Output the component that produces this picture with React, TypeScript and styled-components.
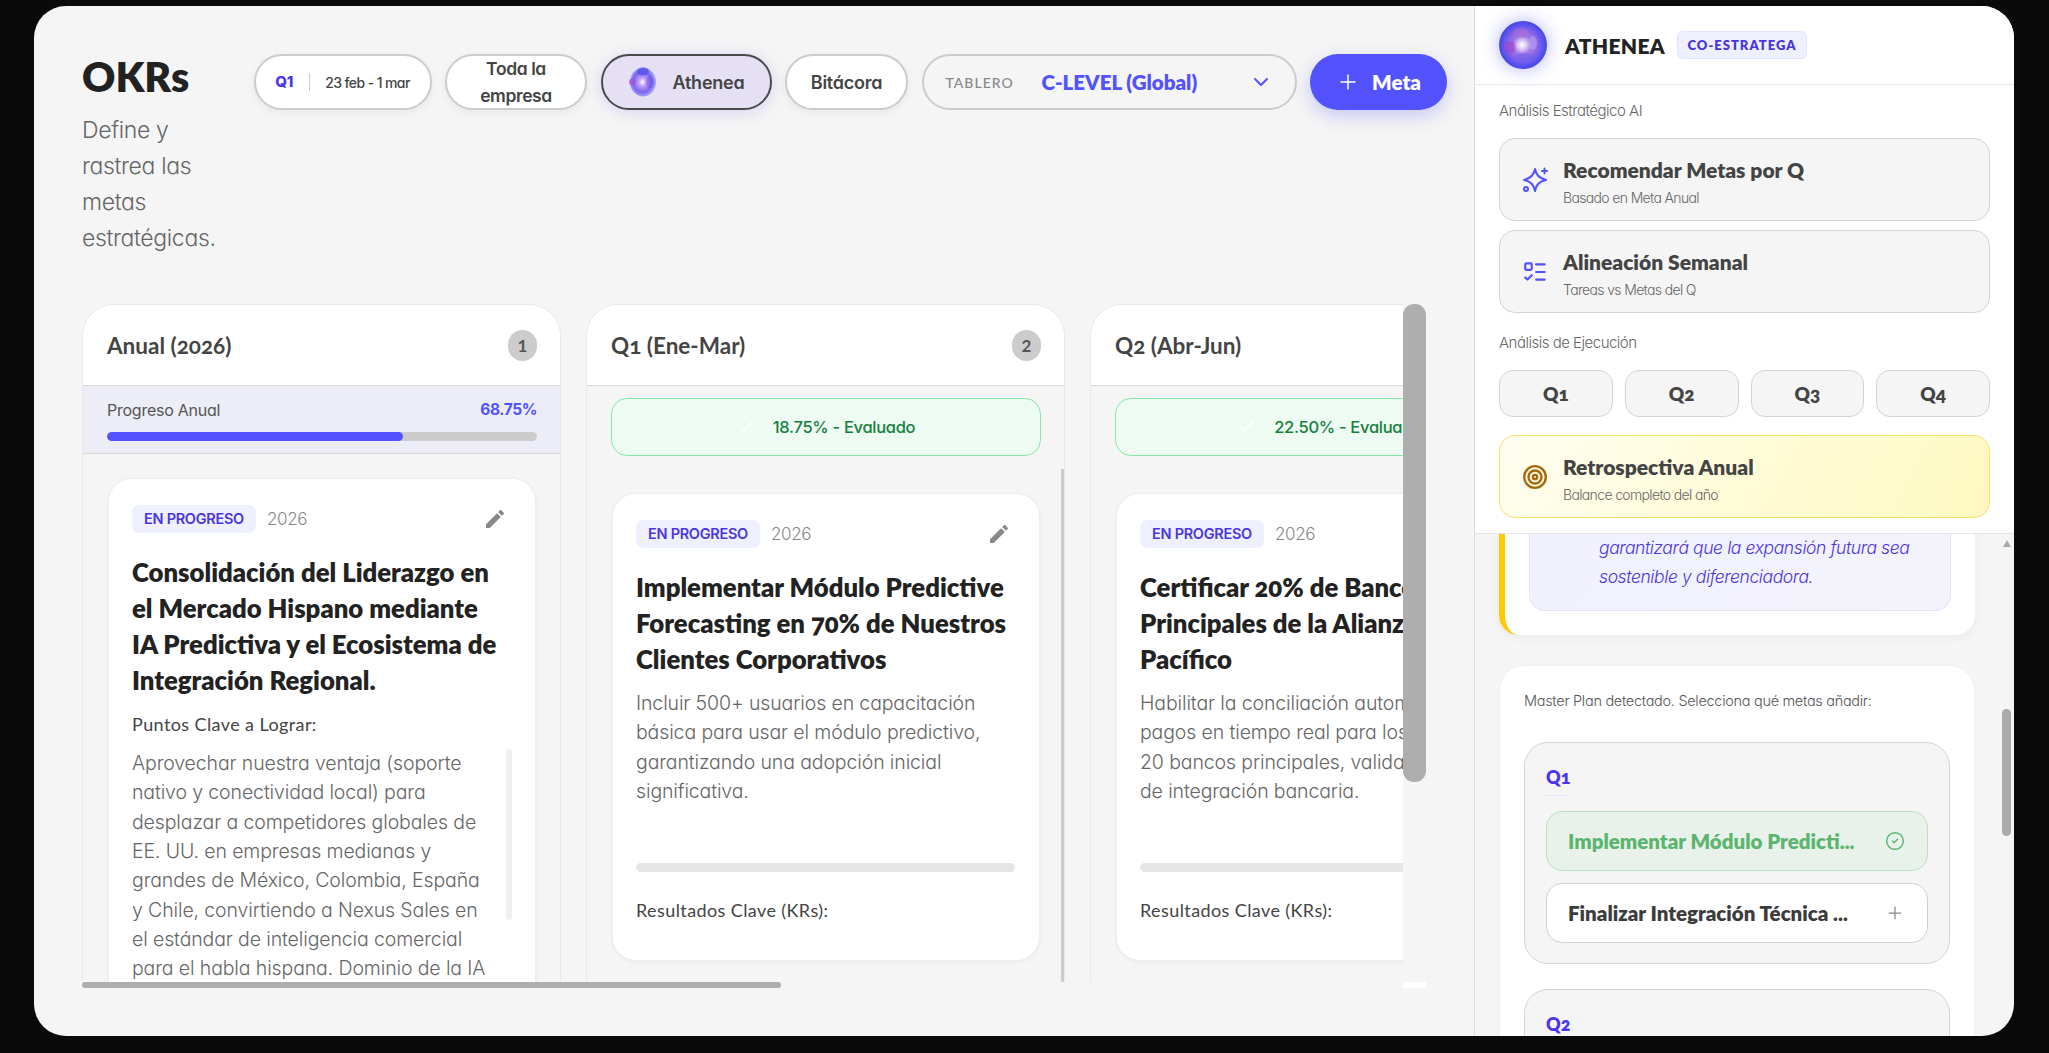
import React from 'react';
import styled, { createGlobalStyle } from 'styled-components';
import { Check, ChevronDown, CircleCheck, ListTodo, Plus, Target } from 'lucide-react';

const BODY_FONT = '"Inter", "Liberation Sans", sans-serif';
const HEAD_FONT = '"Lato", "Noto Sans", sans-serif';

const GlobalStyle = createGlobalStyle`
  * { box-sizing: border-box; }
  html, body { margin: 0; height: 100%; background: #0a0a0a; overflow: hidden; }
  body { font-family: ${BODY_FONT}; font-feature-settings: "cv11" 1; }
  #root { height: 100%; }
`;

const Screen = styled.div`
  height: 100vh;
  padding: 6px 35px 17px 34px;
`;

const Window = styled.div`
  display: flex;
  height: 100%;
  border-radius: 32px;
  overflow: hidden;
  background: #f5f5f5;
`;

const Main = styled.main`
  flex: 1;
  min-width: 0;
  display: flex;
  flex-direction: column;
  padding: 48px;
`;

const Header = styled.header`
  display: flex;
  align-items: flex-start;
  gap: 13.5px;
  height: 203px;
  margin-bottom: 47px;
`;

const TitleBlock = styled.div`
  flex: 0 0 158px;
`;

const PageTitle = styled.h1`
  margin: 0 0 12px;
  font: 800 41px/46px ${HEAD_FONT};
  color: #222;
`;

const Subtitle = styled.p`
  margin: 0;
  width: 140px;
  font-size: 23px;
  font-weight: 300;
  line-height: 36px;
  letter-spacing: -0.35px;
  color: #666;
`;

const Pill = styled.div<{ $w: number }>`
  flex: 0 0 ${({ $w }) => $w}px;
  display: flex;
  align-items: center;
  justify-content: center;
  height: 56px;
  border: 2px solid #ccc;
  border-radius: 28px;
  background: #fff;
  box-shadow: 0 3px 8px rgba(0, 0, 0, 0.06);
  font-size: 18px;
  font-weight: 600;
  letter-spacing: -0.25px;
  color: #444;
`;

const QuarterTag = styled.span`
  font: 800 15px ${BODY_FONT};
  color: #4a35f0;
  padding-right: 16px;
  border-right: 1px solid #ccc;
  margin-right: 15px;
  line-height: 18px;
`;

const DateText = styled.span`
  font-size: 14px;
  font-weight: 500;
  letter-spacing: -0.6px;
`;

const TwoLineLabel = styled.span`
  text-align: center;
  line-height: 27px;
  font-size: 17.5px;
  letter-spacing: -0.4px;
`;

const AtheneaPill = styled(Pill)`
  gap: 15px;
  background: #e6e0f5;
  border-color: #4a4a4a;
  box-shadow: 0 2px 16px rgba(130, 100, 240, 0.25);
`;

const BoardSelect = styled(Pill)`
  justify-content: flex-start;
  padding: 0 22px;
  background: transparent;
  box-shadow: none;
`;

const BoardLabel = styled.span`
  flex: 0 0 96px;
  font: 500 14px ${HEAD_FONT};
  letter-spacing: 1px;
  color: #888;
`;

const BoardValue = styled.span`
  flex: 1;
  font: 800 20.5px ${HEAD_FONT};
  letter-spacing: 0;
  color: #5252ff;
`;

const MetaButton = styled.button`
  flex: 0 0 137px;
  display: flex;
  align-items: center;
  justify-content: center;
  gap: 12px;
  height: 56px;
  border: 0;
  border-radius: 28px;
  background: #5252ff;
  box-shadow: 0 6px 18px rgba(82, 82, 255, 0.28);
  font: 800 20.5px ${HEAD_FONT};
  color: #fff;
`;

const Board = styled.section`
  position: relative;
  flex: 1;
  min-height: 0;
  padding-bottom: 6px;
  overflow: hidden;
`;

const BoardViewport = styled.div`
  display: flex;
  gap: 25px;
  width: 1321px;
  height: 100%;
  overflow: hidden;
`;

const ScrollThumb = styled.div<{ $color?: string }>`
  position: absolute;
  background: ${({ $color }) => $color || '#aeaeae'};
`;

const BoardHThumb = styled(ScrollThumb)`
  left: 0;
  bottom: 0;
  width: 699px;
  height: 6px;
  border-radius: 3px;
`;

const BoardVThumb = styled(ScrollThumb)`
  right: 0;
  top: 0;
  width: 23px;
  height: 478px;
  border-radius: 11px;
`;

const BoardCorner = styled(ScrollThumb)`
  right: 0;
  bottom: 0;
  width: 23px;
  height: 6px;
`;

const Column = styled.div`
  position: relative;
  flex: 0 0 479px;
  height: 961px;
  border: 1px solid #e8e8e8;
  border-radius: 32px 32px 0 0;
  background: #f5f5f5;
  overflow: hidden;
`;

const ColumnThumb = styled(ScrollThumb)`
  right: 0;
  top: 164px;
  width: 3px;
  height: 520px;
`;

const ColumnHeader = styled.div`
  display: flex;
  align-items: center;
  justify-content: space-between;
  height: 81px;
  padding: 0 23px 0 24px;
  background: #fff;
  border-bottom: 1px solid #d8d8d8;
`;

const ColumnTitle = styled.h2`
  margin: 0;
  font: 700 22.5px ${HEAD_FONT};
  font-variant-numeric: oldstyle-nums;
  color: #444;
`;

const CountBadge = styled.span`
  min-width: 29px;
  padding: 0 9px;
  height: 31px;
  border-radius: 16px;
  background: #ccc;
  font: 700 17px/31px ${HEAD_FONT};
  text-align: center;
  color: #555;
`;

const ProgressPanel = styled.div`
  height: 68px;
  padding: 14px 23px 0 24px;
  background: #ecedf6;
  border-bottom: 1px solid #d8d8d8;
`;

const ProgressRow = styled.div`
  display: flex;
  justify-content: space-between;
  font-size: 16px;
  line-height: 20px;
  letter-spacing: -0.25px;
  color: #555;
`;

const ProgressValue = styled.span`
  font-size: 15.5px;
  font-weight: 700;
  letter-spacing: -0.4px;
  color: #5252ff;
`;

const Track = styled.div<{ $color: string }>`
  height: 9px;
  border-radius: 5px;
  background: ${({ $color }) => $color};
  overflow: hidden;
`;

const ProgressTrack = styled(Track)`
  margin-top: 12px;
`;

const TrackFill = styled.div`
  height: 100%;
  border-radius: 5px;
  background: #5252ff;
`;

const ScoreBanner = styled.div`
  display: flex;
  align-items: center;
  justify-content: center;
  gap: 18px;
  height: 58px;
  margin: 12px 23px 37px 24px;
  border: 1px solid #86e6a5;
  border-radius: 16px;
  background: #eefbf2;
  font-size: 16.5px;
  font-weight: 500;
  letter-spacing: -0.3px;
  color: #15803d;
  white-space: nowrap;
`;

const Card = styled.article<{ $first?: boolean }>`
  margin: ${({ $first }) => ($first ? '24px' : '0')} 24px 0 25px;
  padding: 26px 24px 38px 23px;
  border: 1px solid #eee;
  border-radius: 24px;
  background: #fff;
  box-shadow: 0 1px 4px rgba(0, 0, 0, 0.05);
`;

const CardMeta = styled.div`
  display: flex;
  align-items: center;
  height: 28px;
  margin-bottom: 21px;
`;

const StatusTag = styled.span`
  flex: 0 0 124px;
  height: 28px;
  border-radius: 7px;
  background: #eef0ff;
  font-size: 14.5px;
  font-weight: 600;
  line-height: 28px;
  text-align: center;
  letter-spacing: -0.3px;
  color: #4a35e0;
`;

const YearText = styled.span`
  flex: 1;
  margin-left: 11px;
  font-size: 17px;
  font-weight: 300;
  letter-spacing: -0.4px;
  color: #888;
`;

const EditIcon = styled.svg`
  width: 24px;
  height: 24px;
  margin-right: 4px;
  fill: #888;
`;

const CardTitle = styled.h3`
  margin: 0;
  font: 800 25.7px/36px ${HEAD_FONT};
  font-variant-numeric: oldstyle-nums;
  color: #222;
  white-space: nowrap;
`;

const FieldLabel = styled.div`
  margin-top: 14px;
  font: 400 18px/24px ${HEAD_FONT};
  letter-spacing: 0.4px;
  color: #444;
`;

const Description = styled.div`
  position: relative;
  margin-top: 13px;
  font-size: 19.5px;
  font-weight: 300;
  line-height: 29.35px;
  letter-spacing: -0.12px;
  color: #666;
  white-space: pre;
`;

const DescriptionThumb = styled(ScrollThumb)`
  top: 0;
  right: -1px;
  width: 6px;
  height: 171px;
  border-radius: 3px;
`;

const GoalDescription = styled(Description)`
  margin-top: 12px;
`;

const GoalProgress = styled(Track)`
  margin-top: 57px;
`;

const ResultsLabel = styled(FieldLabel)`
  margin-top: 26px;
`;

const Aside = styled.aside`
  flex: 0 0 540px;
  display: flex;
  flex-direction: column;
  border-left: 1px solid #ddd;
`;

const AsideTop = styled.div`
  flex: none;
  height: 528px;
  background: #fff;
  border-bottom: 1px solid #e5e5e5;
`;

const AsideHeader = styled.div`
  display: flex;
  align-items: center;
  height: 79px;
  padding: 0 24px;
  border-bottom: 1px solid #e8e8e8;
`;

const OrbFrame = styled.div`
  flex: 0 0 48px;
  height: 48px;
  margin-right: 18px;
  border-radius: 50%;
  box-shadow: 0 0 18px rgba(82, 82, 255, 0.45);
`;

const AsideName = styled.span`
  font: 800 21px ${HEAD_FONT};
  letter-spacing: 0.3px;
  color: #222;
  margin-right: 12px;
`;

const RoleChip = styled.span`
  width: 130px;
  height: 28px;
  border: 1px solid #e0e4ff;
  border-radius: 6px;
  background: #eef0ff;
  font: 800 13px/26px ${HEAD_FONT};
  letter-spacing: 1px;
  text-align: center;
  color: #4a35e0;
`;

const AsideBody = styled.div`
  padding: 16px 24px 0;
`;

const SectionLabel = styled.div<{ $gap?: number }>`
  margin-top: ${({ $gap }) => $gap || 0}px;
  margin-bottom: 17px;
  font-size: 15px;
  font-weight: 300;
  line-height: 20px;
  letter-spacing: -0.5px;
  color: #666;
`;

const ActionButton = styled.div<{ $gold?: boolean }>`
  display: flex;
  align-items: center;
  gap: 15px;
  height: 83px;
  margin-bottom: 9px;
  padding: 0 22px;
  border: 1px solid ${({ $gold }) => ($gold ? '#fde068' : '#d4d4d4')};
  border-radius: 16px;
  background: ${({ $gold }) =>
    $gold ? 'linear-gradient(120deg, #fffef0, #fef9c0)' : '#f5f5f5'};
  color: ${({ $gold }) => ($gold ? '#a66a0c' : '#5252ff')};
`;

const ActionText = styled.div`
  padding-top: 6px;
`;

const ActionTitle = styled.div`
  font: 800 21px/26px ${HEAD_FONT};
  color: #444;
`;

const ActionSub = styled.div`
  margin-top: 5px;
  font-size: 14px;
  font-weight: 300;
  line-height: 20px;
  letter-spacing: -0.65px;
  color: #666;
`;

const QuarterRow = styled.div`
  display: grid;
  grid-template-columns: repeat(4, 1fr);
  gap: 12px;
  margin-bottom: 18px;
`;

const QuarterButton = styled.div`
  height: 47px;
  border: 1px solid #d4d4d4;
  border-radius: 14px;
  background: #f5f5f5;
  font: 800 19px/45px ${HEAD_FONT};
  font-variant-numeric: oldstyle-nums;
  text-align: center;
  color: #444;
`;

const AsideScroll = styled.div`
  position: relative;
  flex: 1;
  min-height: 0;
  overflow: hidden;
`;

const AsideContent = styled.div`
  margin-top: -40px;
  padding: 0 39px 0 24px;
`;

const AsideArrow = styled.div`
  position: absolute;
  top: 6px;
  right: 3px;
  width: 0;
  height: 0;
  border-left: 4.5px solid transparent;
  border-right: 4.5px solid transparent;
  border-bottom: 7px solid #aaa;
`;

const AsideThumb = styled(ScrollThumb)`
  top: 175px;
  right: 3px;
  width: 9px;
  height: 127px;
  border-radius: 5px;
`;

const InsightCard = styled.div`
  padding: 0 24px 24px;
  border-left: 6px solid #ffc800;
  border-radius: 0 0 20px 20px;
  background: #fff;
  box-shadow: 0 2px 10px rgba(0, 0, 0, 0.06);
`;

const InsightBox = styled.div`
  padding: 39px 20px 19px 69px;
  border: 1px solid #e0e4fb;
  border-top: 0;
  border-radius: 0 0 16px 16px;
  background: linear-gradient(120deg, #f0f1fe, #f4f3fb);
  font-size: 17.5px;
  font-style: italic;
  font-weight: 300;
  line-height: 29px;
  letter-spacing: -0.4px;
  color: #4a35e0;
  white-space: nowrap;
`;

const PlanCard = styled.div`
  margin: 31px 1px 0;
  padding: 24px;
  border-radius: 24px;
  background: #fff;
  box-shadow: 0 0 0 1px #f0f0f0;
`;

const PlanIntro = styled.div`
  margin-bottom: 30px;
  font-size: 14.5px;
  font-weight: 300;
  line-height: 22px;
  letter-spacing: -0.3px;
  color: #555;
  white-space: nowrap;
`;

const QuarterBox = styled.div`
  margin-bottom: 25px;
  padding: 20px 21px;
  border: 1px solid #d4d4d4;
  border-radius: 24px;
  background: #f5f5f5;
`;

const QuarterHeading = styled.div`
  display: inline-block;
  margin-bottom: 15px;
  padding-bottom: 4px;
  border-bottom: 1px solid #e4e7fb;
  font: 800 18px/28px ${HEAD_FONT};
  font-variant-numeric: oldstyle-nums;
  color: #4a35f0;
`;

const PlanItem = styled.div<{ $done?: boolean }>`
  display: flex;
  align-items: center;
  justify-content: space-between;
  height: 60px;
  margin-bottom: 12px;
  padding: 0 22px 0 21px;
  border: 1px solid ${({ $done }) => ($done ? '#b9dfc2' : '#d0d0d0')};
  border-radius: 16px;
  background: ${({ $done }) => ($done ? '#e8f1ea' : '#fff')};
  font: 800 20.5px ${HEAD_FONT};
  color: ${({ $done }) => ($done ? '#5cb56e' : '#3c3c3c')};
  white-space: nowrap;

  &:last-child {
    margin-bottom: 0;
  }
`;

const PencilIcon = () => (
  <EditIcon viewBox="0 0 24 24">
    <path d="M3 17.25V21h3.75L17.81 9.94l-3.75-3.75L3 17.25zM20.71 7.04c.39-.39.39-1.02 0-1.41l-2.34-2.34c-.39-.39-1.02-.39-1.41 0l-1.83 1.83 3.75 3.75 1.83-1.83z" />
  </EditIcon>
);

const SparkIcon = () => (
  <svg width="26" height="26" viewBox="0 0 26 26" fill="none" stroke="currentColor" strokeWidth="2" strokeLinecap="round" strokeLinejoin="round">
    <path d="M13 2c.8 5.6 3.4 9 11 11-7.6 1.4-10.2 5-11 11-.8-6-3.6-9.6-11-11 7.4-2 10.2-5.4 11-11z" />
    <path d="M22.5 1.5v5M20 4h5" />
    <circle cx="4" cy="22" r="2" />
  </svg>
);

const SmallOrb = () => (
  <svg width="30" height="30" viewBox="0 0 30 30">
    <defs>
      <radialGradient id="smallOrbCore" cx="48%" cy="50%" r="55%">
        <stop offset="0%" stopColor="#fff" />
        <stop offset="22%" stopColor="#c7a8f5" />
        <stop offset="65%" stopColor="#7d62ee" />
        <stop offset="100%" stopColor="#8a9cf8" stopOpacity="0.6" />
      </radialGradient>
    </defs>
    <ellipse cx="15" cy="15" rx="13" ry="14.5" fill="url(#smallOrbCore)" />
    <ellipse cx="15" cy="4.5" rx="6" ry="4" fill="#5252e8" opacity="0.75" />
    <circle cx="4.5" cy="15" r="3.5" fill="#a055d8" opacity="0.75" />
    <ellipse cx="22" cy="15" rx="4" ry="6" fill="#6a50e8" opacity="0.4" />
  </svg>
);

const LargeOrb = () => (
  <svg width="48" height="48" viewBox="0 0 48 48">
    <defs>
      <radialGradient id="largeOrbBase" cx="50%" cy="50%" r="50%">
        <stop offset="0%" stopColor="#c79ee8" />
        <stop offset="60%" stopColor="#8a66e8" />
        <stop offset="88%" stopColor="#5450f0" />
        <stop offset="100%" stopColor="#4646dc" />
      </radialGradient>
      <radialGradient id="largeOrbSpark" cx="50%" cy="50%" r="50%">
        <stop offset="0%" stopColor="#fff" />
        <stop offset="45%" stopColor="#fff" stopOpacity="0.55" />
        <stop offset="100%" stopColor="#fff" stopOpacity="0" />
      </radialGradient>
    </defs>
    <circle cx="24" cy="24" r="24" fill="url(#largeOrbBase)" />
    <circle cx="11" cy="26" r="6" fill="#a045c8" opacity="0.6" />
    <ellipse cx="22" cy="12" rx="8" ry="5" fill="#a86ad8" opacity="0.6" />
    <ellipse cx="34" cy="22" rx="4" ry="7" fill="#b9a0f0" opacity="0.6" />
    <ellipse cx="26" cy="36" rx="9" ry="4" fill="#6a5cf0" opacity="0.5" />
    <circle cx="23" cy="24" r="9" fill="url(#largeOrbSpark)" />
  </svg>
);

type Goal = {
  quarter: string;
  count: number;
  score: string;
  title: string[];
  description: string;
  thumb?: boolean;
};

const goals: Goal[] = [
  {
    quarter: 'Q1 (Ene-Mar)',
    count: 2,
    score: '18.75% - Evaluado',
    title: ['Implementar Módulo Predictive', 'Forecasting en 70% de Nuestros', 'Clientes Corporativos'],
    description:
      'Incluir 500+ usuarios en capacitación\nbásica para usar el módulo predictivo,\ngarantizando una adopción inicial\nsignificativa.',
    thumb: true,
  },
  {
    quarter: 'Q2 (Abr-Jun)',
    count: 2,
    score: '22.50% - Evaluado',
    title: ['Certificar 20% de Bancos', 'Principales de la Alianza del', 'Pacífico'],
    description:
      'Habilitar la conciliación automática de\npagos en tiempo real para los\n20 bancos principales, validando la API\nde integración bancaria.',
  },
];

const GoalColumn: React.FC<{ goal: Goal }> = ({ goal }) => (
  <Column>
    <ColumnHeader>
      <ColumnTitle>{goal.quarter}</ColumnTitle>
      <CountBadge>{goal.count}</CountBadge>
    </ColumnHeader>
    <ScoreBanner>
      <Check size={18} color="#fff" />
      {goal.score}
    </ScoreBanner>
    <Card>
      <CardMeta>
        <StatusTag>EN PROGRESO</StatusTag>
        <YearText>2026</YearText>
        <PencilIcon />
      </CardMeta>
      <CardTitle>
        {goal.title.map((line) => (
          <div key={line}>{line}</div>
        ))}
      </CardTitle>
      <GoalDescription>{goal.description}</GoalDescription>
      <GoalProgress $color="#e5e5e5" />
      <ResultsLabel>Resultados Clave (KRs):</ResultsLabel>
    </Card>
    {goal.thumb && <ColumnThumb $color="#ccc" />}
  </Column>
);

const App: React.FC = () => (
  <Screen>
    <GlobalStyle />
    <Window>
      <Main>
        <Header>
          <TitleBlock>
            <PageTitle>OKRs</PageTitle>
            <Subtitle>Define y rastrea las metas estratégicas.</Subtitle>
          </TitleBlock>
          <Pill $w={178}>
            <QuarterTag>Q1</QuarterTag>
            <DateText>23 feb - 1 mar</DateText>
          </Pill>
          <Pill $w={142}>
            <TwoLineLabel>
              Toda la
              <br />
              empresa
            </TwoLineLabel>
          </Pill>
          <AtheneaPill $w={171}>
            <SmallOrb />
            Athenea
          </AtheneaPill>
          <Pill $w={123}>Bitácora</Pill>
          <BoardSelect $w={375}>
            <BoardLabel>TABLERO</BoardLabel>
            <BoardValue>C-LEVEL (Global)</BoardValue>
            <ChevronDown size={24} color="#5252ff" strokeWidth={2} />
          </BoardSelect>
          <MetaButton>
            <Plus size={24} strokeWidth={1.5} />
            Meta
          </MetaButton>
        </Header>

        <Board>
          <BoardViewport>
            <Column>
              <ColumnHeader>
                <ColumnTitle>Anual (2026)</ColumnTitle>
                <CountBadge>1</CountBadge>
              </ColumnHeader>
              <ProgressPanel>
                <ProgressRow>
                  <span>Progreso Anual</span>
                  <ProgressValue>68.75%</ProgressValue>
                </ProgressRow>
                <ProgressTrack $color="#ccc">
                  <TrackFill style={{ width: '68.75%' }} />
                </ProgressTrack>
              </ProgressPanel>
              <Card $first>
                <CardMeta>
                  <StatusTag>EN PROGRESO</StatusTag>
                  <YearText>2026</YearText>
                  <PencilIcon />
                </CardMeta>
                <CardTitle>
                  <div>Consolidación del Liderazgo en</div>
                  <div>el Mercado Hispano mediante</div>
                  <div>IA Predictiva y el Ecosistema de</div>
                  <div>Integración Regional.</div>
                </CardTitle>
                <FieldLabel>Puntos Clave a Lograr:</FieldLabel>
                <Description>
                  {'Aprovechar nuestra ventaja (soporte\nnativo y conectividad local) para\ndesplazar a competidores globales de\nEE. UU. en empresas medianas y\ngrandes de México, Colombia, España\ny Chile, convirtiendo a Nexus Sales en\nel estándar de inteligencia comercial\npara el habla hispana. Dominio de la IA'}
                  <DescriptionThumb $color="#f0f0f0" />
                </Description>
              </Card>
            </Column>
            {goals.map((goal) => (
              <GoalColumn key={goal.quarter} goal={goal} />
            ))}
          </BoardViewport>
          <BoardVThumb />
          <BoardHThumb />
          <BoardCorner $color="#fff" />
        </Board>
      </Main>

      <Aside>
        <AsideTop>
          <AsideHeader>
            <OrbFrame>
              <LargeOrb />
            </OrbFrame>
            <AsideName>ATHENEA</AsideName>
            <RoleChip>CO-ESTRATEGA</RoleChip>
          </AsideHeader>
          <AsideBody>
            <SectionLabel>Análisis Estratégico AI</SectionLabel>
            <ActionButton>
              <SparkIcon />
              <ActionText>
                <ActionTitle>Recomendar Metas por Q</ActionTitle>
                <ActionSub>Basado en Meta Anual</ActionSub>
              </ActionText>
            </ActionButton>
            <ActionButton>
              <ListTodo size={26} />
              <ActionText>
                <ActionTitle>Alineación Semanal</ActionTitle>
                <ActionSub>Tareas vs Metas del Q</ActionSub>
              </ActionText>
            </ActionButton>
            <SectionLabel $gap={20}>Análisis de Ejecución</SectionLabel>
            <QuarterRow>
              <QuarterButton>Q1</QuarterButton>
              <QuarterButton>Q2</QuarterButton>
              <QuarterButton>Q3</QuarterButton>
              <QuarterButton>Q4</QuarterButton>
            </QuarterRow>
            <ActionButton $gold>
              <Target size={26} strokeWidth={2.2} />
              <ActionText>
                <ActionTitle>Retrospectiva Anual</ActionTitle>
                <ActionSub>Balance completo del año</ActionSub>
              </ActionText>
            </ActionButton>
          </AsideBody>
        </AsideTop>

        <AsideScroll>
          <AsideContent>
            <InsightCard>
              <InsightBox>
                garantizará que la expansión futura sea
                <br />
                sostenible y diferenciadora.
              </InsightBox>
            </InsightCard>
            <PlanCard>
              <PlanIntro>Master Plan detectado. Selecciona qué metas añadir:</PlanIntro>
              <QuarterBox>
                <QuarterHeading>Q1</QuarterHeading>
                <PlanItem $done>
                  Implementar Módulo Predicti...
                  <CircleCheck size={20} strokeWidth={1.75} />
                </PlanItem>
                <PlanItem>
                  Finalizar Integración Técnica ...
                  <Plus size={20} color="#888" strokeWidth={1.5} />
                </PlanItem>
              </QuarterBox>
              <QuarterBox>
                <QuarterHeading>Q2</QuarterHeading>
              </QuarterBox>
            </PlanCard>
          </AsideContent>
          <AsideArrow />
          <AsideThumb $color="#aaa" />
        </AsideScroll>
      </Aside>
    </Window>
  </Screen>
);

export default App;
